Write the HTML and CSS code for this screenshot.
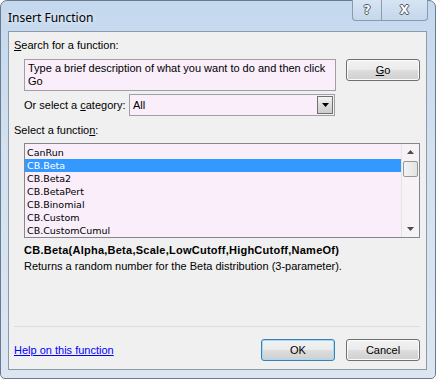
FILE: index.html
```html
<!DOCTYPE html>
<html lang="en">
<head>
    <meta charset="UTF-8">
    <title>Insert Function</title>
    <link rel="stylesheet" href="styles.css">
</head>
<body>
    <div class="window">
        <div class="titlebar">
            <span class="title">Insert Function</span>
            <div class="caption-buttons">
                <span class="cap cap-help">?</span>
                <span class="cap cap-close">X</span>
            </div>
        </div>
        <div class="client">
            <div class="label first"><u>S</u>earch for a function:</div>
            <div class="search-row">
                <div class="search-box">Type a brief description of what you want to do and then click Go</div>
                <button class="btn">
                    <u>G</u>o
                </button>
            </div>
            <div class="category-row">
                <span>Or select a <u>c</u>ategory:</span>
                <div class="select">
                    <span>All</span>
                    <span class="drop"><svg width="7" height="4" viewBox="0 0 7 4"><path d="M0 0h7L3.5 4z" fill="#000"/></svg></span>
                </div>
            </div>
            <div class="label">Select a functio<u>n</u>:</div>
            <div class="list">
                <div class="items">
                    <div class="item">CanRun</div>
                    <div class="item selected">CB.Beta</div>
                    <div class="item">CB.Beta2</div>
                    <div class="item">CB.BetaPert</div>
                    <div class="item">CB.Binomial</div>
                    <div class="item">CB.Custom</div>
                    <div class="item">CB.CustomCumul</div>
                </div>
                <div class="scrollbar">
                    <svg class="arrow" width="7" height="4" viewBox="0 0 7 4"><path d="M3.5 0L7 4H0z" fill="#4d4d4d"/></svg>
                    <div class="thumb"></div>
                    <div class="track"></div>
                    <svg class="arrow" width="7" height="4" viewBox="0 0 7 4"><path d="M0 0h7L3.5 4z" fill="#4d4d4d"/></svg>
                </div>
            </div>
            <div class="signature">CB.Beta(Alpha,Beta,Scale,LowCutoff,HighCutoff,NameOf)</div>
            <div class="description">Returns a random number for the Beta distribution (3-parameter).</div>
            <div class="spacer"></div>
            <div class="separator"></div>
            <div class="footer">
                <a href="#" class="help">Help on this function</a>
                <div class="footer-buttons">
                    <button class="btn default">OK</button>
                    <button class="btn">Cancel</button>
                </div>
            </div>
        </div>
    </div>
</body>
</html>
```

FILE: styles.css
```css
body {
    margin: 0;
    background-color: #fff;
    font-family: "Liberation Sans", Arial, sans-serif;
    font-size: 11px;
    color: #000;
}
.window {
    width: 436px;
    height: 379px;
    box-sizing: border-box;
    border: 1px solid #6b7a8c;
    border-radius: 7px 7px 5px 5px;
    background: linear-gradient(#c4d8ee, #d3e1f0 40%, #dbe6f2);
    padding: 0 8px 8px 7px;
    display: flex;
    flex-direction: column;
}
.titlebar {
    height: 30px;
    display: flex;
    align-items: flex-start;
    justify-content: space-between;
    flex-shrink: 0;
}
.title {
    font-family: "Noto Sans", sans-serif;
    font-size: 12px;
    color: #000;
    margin-top: 8px;
    text-shadow: 0 0 6px #fff;
}
.caption-buttons {
    display: flex;
    height: 20px;
    margin-top: -1px;
    margin-right: -1px;
    border: 1px solid #8a9bb0;
    border-top: none;
    border-radius: 0 0 4px 4px;
    background: linear-gradient(#d7e5f3, #c5d7eb);
}
.cap {
    display: flex;
    align-items: center;
    justify-content: center;
    font-family: "DejaVu Sans", sans-serif;
    font-weight: bold;
    font-size: 12px;
    color: #fff;
    text-shadow: 1px 0 0 #4a5564, -1px 0 0 #4a5564, 0 1px 0 #4a5564, 0 -1px 0 #4a5564;
}
.cap-help {
    width: 28px;
    border-right: 1px solid #8a9bb0;
}
.cap-close {
    width: 45px;
}
.client {
    flex: 1;
    border: 1px solid #8e9aa6;
    background-color: #f0f0f0;
    display: flex;
    flex-direction: column;
    padding: 0 6px 0 5px;
}
.label {
    height: 13px;
    line-height: 13px;
}
.label.first {
    margin-top: 7px;
}
.search-row {
    display: flex;
    justify-content: space-between;
    margin: 7px 0 0 10px;
}
.search-box {
    border: 1px solid #a0a0a0;
    background-color: #f9eef9;
    padding: 2px 3px 0;
    line-height: 13px;
    box-sizing: border-box;
    width: 312px;
    height: 32px;
}
.btn {
    width: 74px;
    height: 22px;
    border: 1px solid #707070;
    border-radius: 3px;
    background: linear-gradient(#f2f2f2 0%, #ebebeb 48%, #dddddd 52%, #cfcfcf 100%);
    font-family: "Liberation Sans", Arial, sans-serif;
    font-size: 11px;
    color: #000;
    padding: 0;
    box-shadow: inset 0 0 0 1px #fbfbfb;
}
.btn.default {
    border-color: #3c7fb1;
    box-shadow: inset 0 0 0 1px #9fdcf9;
}
.category-row {
    display: flex;
    align-items: center;
    margin: 3px 0 0 10px;
    height: 22px;
}
.category-row span:first-child {
    width: 105px;
}
.select {
    width: 206px;
    height: 22px;
    box-sizing: border-box;
    border: 1px solid #a0a0a0;
    background-color: #f9eef9;
    display: flex;
    align-items: center;
    justify-content: space-between;
    padding-left: 3px;
}
.drop {
    width: 16px;
    height: 18px;
    margin-right: 1px;
    box-sizing: border-box;
    border: 1px solid #707070;
    background: linear-gradient(#f4f4f4, #dcdcdc 50%, #cdcdcd);
    display: flex;
    align-items: center;
    justify-content: center;
}
.category-row + .label {
    margin-top: 8px;
}
.list {
    margin: 6px 0 0 10px;
    height: 95px;
    box-sizing: border-box;
    border: 1px solid #828790;
    background-color: #f9eef9;
    display: flex;
}
.items {
    flex: 1;
    padding-top: 2px;
    font-family: "DejaVu Sans", sans-serif;
    font-size: 9.5px;
}
.item {
    height: 13px;
    line-height: 14px;
    padding-left: 2px;
}
.item.selected {
    background-color: #3399ff;
    color: #fff;
}
.scrollbar {
    width: 17px;
    border-left: 1px solid #e4e4e4;
    background-color: #f6f2f6;
    display: flex;
    flex-direction: column;
    align-items: center;
}
.arrow {
    margin: 6px 0;
}
.thumb {
    width: 13px;
    height: 14px;
    margin-top: 1px;
    border: 1px solid #979797;
    border-radius: 2px;
    background: linear-gradient(90deg, #f4f4f4, #e2e2e2);
}
.track {
    flex: 1;
}
.signature {
    font-weight: bold;
    letter-spacing: 0.25px;
    margin: 6px 0 0 10px;
    height: 13px;
    line-height: 13px;
}
.description {
    margin: 3px 0 0 10px;
    height: 13px;
    line-height: 13px;
}
.spacer {
    flex: 1;
}
.separator {
    border-top: 1px solid #d5dfe5;
    margin-bottom: 12px;
}
.footer {
    display: flex;
    justify-content: space-between;
    align-items: center;
    margin-bottom: 8px;
}
.help {
    color: #0000ff;
    text-decoration: underline;
}
.footer-buttons {
    display: flex;
    gap: 11px;
}
```
